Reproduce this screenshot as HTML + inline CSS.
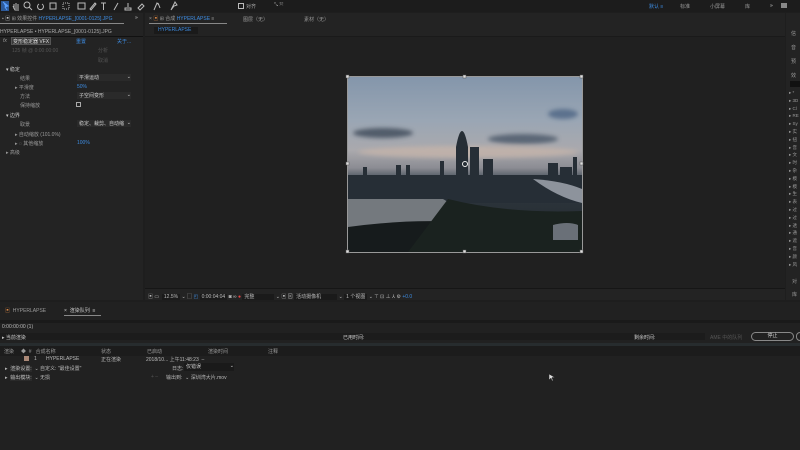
<!DOCTYPE html><html><head><meta charset="utf-8"><style>
*{margin:0;padding:0;box-sizing:border-box}
body{width:800px;height:450px;background:#1e1e1e;overflow:hidden;position:relative;font-family:"Liberation Sans","Noto Sans CJK SC",sans-serif;font-size:5px;color:#9a9a9a}
.a{position:absolute;white-space:nowrap}
.b{color:#3d8be0}
.p{position:absolute;background:#232323}
</style></head><body>
<div class="p" style="left:0;top:0;width:800px;height:12px;background:#1c1c1c"></div>
<div class="a" style="left:1px;top:1px;width:8px;height:10px;background:#2d5a9a"></div>
<svg class="a" style="left:0;top:0" width="240" height="12"><g stroke="#bbb" fill="none" stroke-width="1">
<path d="M3 2l5 4-3 1 2 3" fill="#5aa0ff" stroke="#5aa0ff"/>
<path d="M14 9V4M16 9V3M18 9V4M13 6l2 4h4"/><circle cx="27" cy="5" r="3"/><path d="M29 7l3 3"/>
<path d="M39 4a3 3 0 1 0 3 0"/><rect x="50" y="3" width="6" height="6"/><rect x="63" y="3" width="6" height="6" stroke-dasharray="1"/>
<rect x="78" y="3" width="7" height="6"/><path d="M90 9l5-6 1 1-5 6z"/><path d="M101 3h5M103.5 3v7"/>
<path d="M114 10l4-7"/><path d="M128 3v4M125 8h6v2h-6z"/><path d="M138 8l4-4 2 2-4 4z"/><path d="M154 10l3-7 2 2M158 3l2 5"/><path d="M171 10l3-4 3-1-2-3z"/>
</g></svg>
<div class="a" style="left:238px;top:3px;width:6px;height:6px;border:1px solid #bbb"></div>
<div class="a" style="left:246px;top:3px;color:#aaa">对齐</div>
<div class="a" style="left:274px;top:2px;color:#aaa">⤡ ⤧</div>
<div class="a" style="left:649px;top:3px;color:#3d8be0">默认 ≡</div>
<div class="a" style="left:680px;top:3px">标准</div>
<div class="a" style="left:710px;top:3px">小屏幕</div>
<div class="a" style="left:745px;top:3px">库</div>
<div class="a" style="left:770px;top:3px;color:#ccc">»</div>
<div class="a" style="left:781px;top:3px;width:6px;height:5px;background:#888"></div>
<div class="p" style="left:0;top:13px;width:143px;height:287px"></div>
<div class="a" style="left:2px;top:15px">▪ <span style="color:#ccc">▣</span> ⊞ 效果控件 <span class="b">HYPERLAPSE_[0001-0125].JPG</span></div>
<div class="a" style="left:0;top:23px;width:124px;height:1px;background:#888"></div>
<div class="a" style="left:135px;top:15px;color:#ccc">»</div>
<div class="a" style="left:0;top:29px;color:#aaa">HYPERLAPSE • HYPERLAPSE_[0001-0125].JPG</div>
<div class="a" style="left:0;top:36px;width:143px;height:1px;background:#111"></div>
<div class="a" style="left:3px;top:38px;font-style:italic">fx</div>
<div class="a" style="left:11px;top:37px;width:40px;height:8px;background:#3a3a3a;border:1px solid #555;color:#ddd;padding-left:1px">变形稳定器 VFX</div>
<div class="a b" style="left:76px;top:38px">重置</div>
<div class="a b" style="left:117px;top:38px">关于...</div>
<div class="a" style="left:12px;top:47px;color:#555">125 帧 @ 0:00:00:00</div>
<div class="a" style="left:98px;top:47px;color:#555">分析</div>
<div class="a" style="left:98px;top:57px;color:#555">取消</div>
<div class="a" style="left:6px;top:66px;color:#ccc">▾ 稳定</div>
<div class="a" style="left:20px;top:75px">结果</div><div class="a" style="left:77px;top:74px;width:54px;height:7px;background:#2a2a2a;color:#ccc;padding-left:2px">平滑运动 <span style="float:right">⌄</span></div>
<div class="a" style="left:15px;top:84px">▸ 平滑度</div><div class="a b" style="left:77px;top:84px">50%</div>
<div class="a" style="left:20px;top:93px">方法</div><div class="a" style="left:77px;top:92px;width:54px;height:7px;background:#2a2a2a;color:#ccc;padding-left:2px">子空间变形 <span style="float:right">⌄</span></div>
<div class="a" style="left:20px;top:102px">保持缩放</div><div class="a" style="left:76px;top:102px;width:5px;height:5px;border:1px solid #aaa"></div>
<div class="a" style="left:6px;top:112px;color:#ccc">▾ 边界</div>
<div class="a" style="left:20px;top:121px">取景</div><div class="a" style="left:77px;top:120px;width:54px;height:7px;background:#2a2a2a;color:#ccc;padding-left:2px">稳定、裁剪、自动缩 <span style="float:right">⌄</span></div>
<div class="a" style="left:15px;top:131px">▸ 自动缩放 (101.0%)</div>
<div class="a" style="left:15px;top:140px">▸ ◌ 其他缩放</div><div class="a b" style="left:77px;top:140px">100%</div>
<div class="a" style="left:6px;top:149px">▸ 高级</div>
<div class="p" style="left:145px;top:13px;width:640px;height:287px"></div>
<div class="a" style="left:149px;top:15px">× <span style="color:#d84">▣</span> ⊞ 合成 <span class="b">HYPERLAPSE</span> ≡</div>
<div class="a" style="left:149px;top:23px;width:78px;height:1px;background:#888"></div>
<div class="a" style="left:243px;top:16px">图层（无）</div>
<div class="a" style="left:304px;top:16px">素材（无）</div>
<div class="a" style="left:154px;top:27px;width:44px;height:7px;background:#1a1a1a;color:#3d8be0;padding-left:4px">HYPERLAPSE</div>
<div class="a" style="left:145px;top:36px;width:640px;height:1px;background:#1a1a1a"></div>
<div class="a" style="left:145px;top:37px;width:640px;height:251px;background:#202020"></div>
<div class="a" style="left:348px;top:77px;width:234px;height:175px;overflow:hidden;background:linear-gradient(#8496ab 0%,#9aa6b4 25%,#aaa9ad 42%,#8b8c93 52%,#4a545e 58%,#2c343b 70%,#1d2427 100%)">
<svg width="234" height="175" style="position:absolute;left:0;top:0">
<defs><filter id="f"><feGaussianBlur stdDeviation="2"/></filter></defs>
<g filter="url(#f)" opacity=".8"><ellipse cx="35" cy="56" rx="30" ry="5" fill="#3e4858"/><ellipse cx="175" cy="62" rx="35" ry="5" fill="#4a5668"/><ellipse cx="215" cy="37" rx="15" ry="5" fill="#4d6584"/><ellipse cx="120" cy="75" rx="110" ry="6" fill="#c4b4aa"/></g>
<g fill="#262e36"><rect x="15" y="90" width="4" height="25"/><rect x="48" y="88" width="5" height="25"/><rect x="58" y="88" width="4" height="25"/><rect x="92" y="84" width="4" height="30"/><path d="M108 120V70Q114 38 120 70V120z"/><rect x="122" y="70" width="9" height="50"/><rect x="135" y="82" width="10" height="35"/><rect x="212" y="90" width="12" height="25"/><rect x="200" y="86" width="10" height="30"/><rect x="225" y="80" width="4" height="35"/>
<rect x="0" y="98" width="234" height="28"/></g>
<path d="M0 122h95q15 8 5 18q-40 18-100 12z" fill="#74797e"/>
<path d="M0 150q60-8 110-5L75 175H0z" fill="#161b1c"/>
<path d="M100 122q60 15 134 12v41H60z" fill="#1a221f"/>
<path d="M185 102q30 2 49 10v14q-25-6-49-24z" fill="#8d939c"/>
<path d="M205 148q15-4 25 0v15h-25z" fill="#6a7078"/>
</svg></div>
<div class="a" style="left:347px;top:76px;width:236px;height:177px;border:1px solid #999"></div>
<svg class="a" style="left:344px;top:73px" width="243" height="183"><g fill="#ddd" stroke="#555" stroke-width=".5"><rect x="2" y="2" width="3" height="3"/><rect x="119" y="2" width="3" height="3"/><rect x="236" y="2" width="3" height="3"/><rect x="2" y="89" width="3" height="3"/><rect x="236" y="89" width="3" height="3"/><rect x="2" y="177" width="3" height="3"/><rect x="119" y="177" width="3" height="3"/><rect x="236" y="177" width="3" height="3"/></g><circle cx="121" cy="91" r="2.5" fill="none" stroke="#eee"/></svg>
<div class="a" style="left:145px;top:288px;width:640px;height:1px;background:#161616"></div>
<div class="a" style="left:148px;top:293px;color:#bbb">▣ ▭ &nbsp;<span style="background:#1a1a1a;padding:0 2px">12.5%</span> ⌄ ▢ <span style="color:#3d8be0">◰</span> <span style="background:#1a1a1a;padding:0 2px">0:00:04:04</span> ◙ ∞ <span style="color:#e44">●</span> <span style="background:#1a1a1a;padding:0 20px 0 2px">完整</span> ⌄ ▣ ⊠ <span style="background:#1a1a1a;padding:0 16px 0 2px">活动摄像机</span> ⌄ <span style="background:#1a1a1a;padding:0 2px">1 个视图</span> ⌄ ⊤ ⊡ ⊥ ⅄ ⚙ <span class="b">+0.0</span></div>
<div class="p" style="left:786px;top:13px;width:14px;height:287px"></div>
<div class="a" style="left:791px;top:27px;line-height:14px">信<br>音<br>预<br>效</div>
<div class="a" style="left:790px;top:81px;width:10px;height:6px;background:#111"></div>
<div class="a" style="left:789px;top:89px;line-height:7.8px;font-size:4.5px">▸ *<br>▸ 3D<br>▸ Cl<br>▸ RE<br>▸ Sy<br>▸ 实<br>▸ 扭<br>▸ 音<br>▸ 文<br>▸ 时<br>▸ 杂<br>▸ 模<br>▸ 模<br>▸ 生<br>▸ 表<br>▸ 过<br>▸ 过<br>▸ 透<br>▸ 通<br>▸ 遮<br>▸ 音<br>▸ 颜<br>▸ 风</div>
<div class="a" style="left:792px;top:278px">对</div><div class="a" style="left:792px;top:291px">库</div>
<div class="p" style="left:0;top:302px;width:800px;height:148px;background:#212121"></div>
<div class="a" style="left:5px;top:307px"><span style="color:#d84">▣</span> &nbsp;HYPERLAPSE</div>
<div class="a" style="left:64px;top:307px;color:#ccc">× &nbsp;渲染队列 &nbsp;≡</div>
<div class="a" style="left:64px;top:315px;width:37px;height:1px;background:#888"></div>
<div class="a" style="left:0;top:320px;width:800px;height:3px;background:#1a1a1a"></div>
<div class="a" style="left:2px;top:324px;color:#bbb">0:00:00:00 (1)</div>
<div class="a" style="left:0;top:333px;width:705px;height:7px;background:#1c1c1c"></div>
<div class="a" style="left:2px;top:334px;color:#ccc">▸ 当前渲染</div>
<div class="a" style="left:343px;top:334px;color:#ccc">已用时间:</div>
<div class="a" style="left:634px;top:334px;color:#ccc">剩余时间:</div>
<div class="a" style="left:710px;top:334px;color:#555">AME 中的队列</div>
<div class="a" style="left:751px;top:332px;width:43px;height:9px;border:1px solid #888;border-radius:5px;text-align:center;color:#ccc;line-height:7px">停止</div>
<div class="a" style="left:796px;top:332px;width:8px;height:9px;border:1px solid #888;border-radius:5px"></div>
<div class="a" style="left:0;top:343px;width:800px;height:3px;background:#272c2e"></div>
<div class="a" style="left:0;top:346px;width:800px;height:10px;background:#1c1c1c"></div>
<div class="a" style="left:4px;top:348px">渲染 &nbsp;&nbsp;&nbsp;&nbsp;◆ &nbsp;# &nbsp;&nbsp;合成名称</div>
<div class="a" style="left:101px;top:348px">状态</div><div class="a" style="left:147px;top:348px">已启动</div><div class="a" style="left:208px;top:348px">渲染时间</div><div class="a" style="left:268px;top:348px">注释</div>
<div class="a" style="left:24px;top:356px;width:5px;height:5px;background:#a87"></div>
<div class="a" style="left:34px;top:356px;color:#bbb">1</div>
<div class="a" style="left:46px;top:356px;color:#bbb">HYPERLAPSE</div>
<div class="a" style="left:101px;top:356px;color:#bbb">正在渲染</div>
<div class="a" style="left:146px;top:356px;color:#bbb">2018/10... 上午11:48:23 &nbsp;–</div>
<div class="a" style="left:5px;top:365px;color:#bbb">▸ &nbsp;<span style="background:#2a2a2a">渲染设置:</span> &nbsp;⌄ 自定义: "最佳设置"</div>
<div class="a" style="left:172px;top:365px;color:#bbb">日志:</div>
<div class="a" style="left:184px;top:363px;width:50px;height:8px;background:#1a1a1a;color:#ccc;padding-left:2px">仅错误 <span style="float:right">⌄</span></div>
<div class="a" style="left:5px;top:374px;color:#bbb">▸ &nbsp;<span style="background:#2a2a2a">输出模块:</span> &nbsp;⌄ 无损</div>
<div class="a" style="left:151px;top:374px;color:#555">+ –</div>
<div class="a" style="left:166px;top:374px;color:#bbb">输出到: &nbsp;⌄ 深圳湾大片.mov</div>
<svg class="a" style="left:548px;top:373px" width="8" height="9"><path d="M1 1v6l2-2 1 3 1-.5-1-3h3z" fill="#ddd" stroke="#222" stroke-width=".5"/></svg>
</body></html>
